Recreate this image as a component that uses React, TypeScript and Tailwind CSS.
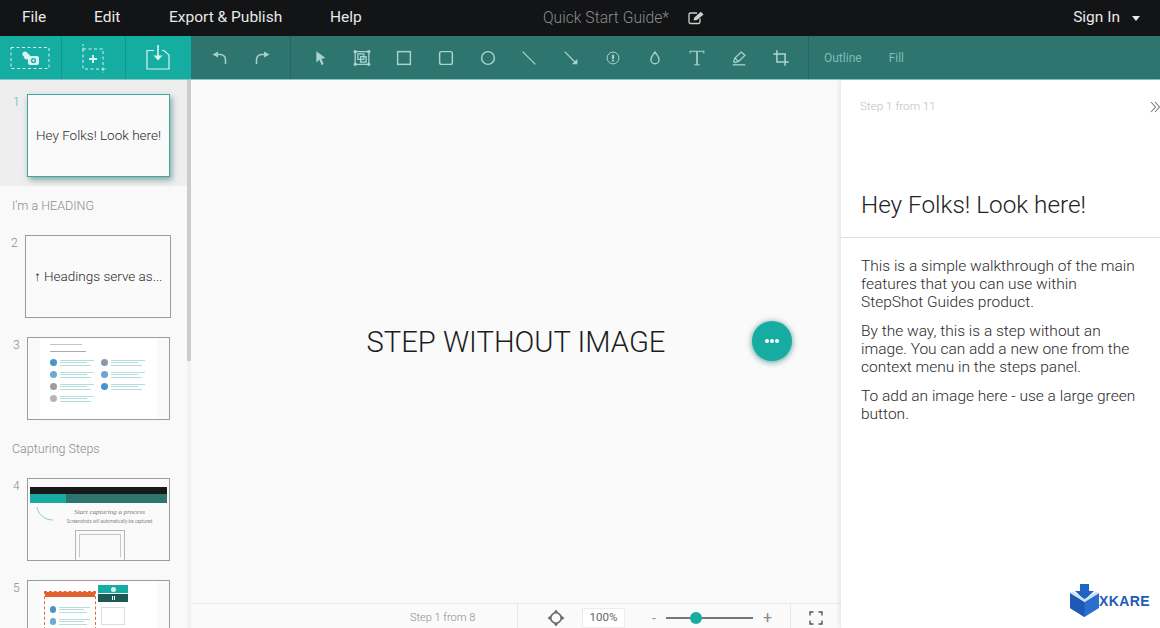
import type { ReactNode } from "react";

const menus = [
  { label: "File", w: "w-[72px]" },
  { label: "Edit", w: "w-[75px]" },
  { label: "Export & Publish", w: "w-[161px]" },
  { label: "Help", w: "w-[60px]" },
];

const Svg = ({ children, size = 22 }: { children: ReactNode; size?: number }) => (
  <svg width={size} height={size} viewBox="0 0 22 22" fill="none" stroke="currentColor" strokeWidth="1.4">
    {children}
  </svg>
);

// drawing tools, left to right
const tools = [
  <path d="M7 3.5 L17 11 L12.6 11.8 L15 17.8 L12.6 18.6 L10.4 13 L7 16 Z" fill="currentColor" stroke="none" />,
  <>
    <rect x="3.5" y="4" width="15" height="14" />
    <rect x="6.5" y="6.5" width="6.5" height="6" />
    <rect x="9.5" y="9.5" width="6" height="6" />
    <circle cx="3.5" cy="4" r="1.2" fill="currentColor" />
    <circle cx="18.5" cy="4" r="1.2" fill="currentColor" />
    <circle cx="3.5" cy="18" r="1.2" fill="currentColor" />
    <circle cx="18.5" cy="18" r="1.2" fill="currentColor" />
  </>,
  <rect x="4" y="4" width="14" height="14" strokeWidth="1.6" />,
  <rect x="4" y="4" width="14" height="14" rx="2" strokeWidth="1.6" />,
  <circle cx="11" cy="11" r="7" strokeWidth="1.6" />,
  <path d="M4 4 L18 18" />,
  <>
    <path d="M4 4 L17 17" />
    <path d="M18 12 L18 18 L12 18 Z" fill="currentColor" stroke="none" />
  </>,
  <>
    <circle cx="11" cy="11" r="6.5" strokeWidth="1.1" />
    <rect x="9.8" y="7.5" width="2.4" height="4.5" fill="currentColor" stroke="none" />
    <rect x="9.8" y="13" width="2.4" height="1.8" fill="currentColor" stroke="none" />
  </>,
  <path d="M11 4.5 C13 7.5 15.5 9.5 15.5 12.8 A4.5 4.5 0 0 1 6.5 12.8 C6.5 9.5 9 7.5 11 4.5 Z" strokeWidth="1.5" />,
  <>
    <path d="M3.5 6 L3.5 3.5 L18.5 3.5 L18.5 6" strokeWidth="1.2" />
    <path d="M11 3.5 L11 18.5" strokeWidth="1.8" />
    <path d="M8 18.5 L14 18.5" strokeWidth="1.2" />
  </>,
  <>
    <path d="M5 15 L6.5 11 L13.5 4.5 L17.5 8 L11 14.5 L7 16 Z" />
    <path d="M6.5 11 L10.5 15" />
    <path d="M4 18.5 L18 18.5" />
  </>,
  <>
    <path d="M6.5 2.5 L6.5 15.5 L19.5 15.5" strokeWidth="1.7" />
    <path d="M2.5 6.5 L15.5 6.5 L15.5 19.5" strokeWidth="1.7" />
  </>,
];

const ThumbFrame = ({ num, children, wide, active }: { num: number; children: ReactNode; wide?: boolean; active?: boolean }) => (
  <div className={`flex items-start ${wide ? "pl-[11px]" : "pl-[13px]"}`}>
    <span className={`w-[14px] text-[12px] leading-[14px] mt-[1px] font-light ${active ? "text-[#4fb7ae]" : "text-[#8a8a8a]"}`}>{num}</span>
    <div
      className={`h-[83px] overflow-hidden bg-[#fafafa] border ${wide ? "w-[146px]" : "w-[143px]"} ${
        active ? "border-[#3fa69e] shadow-[2px_3px_6px_rgba(40,110,105,0.55)]" : "border-[#9c9c9c]"
      }`}
    >
      {children}
    </div>
  </div>
);

const Lines = ({ c, w }: { c: string; w: string }) => (
  <div className={`flex flex-col gap-[1.5px] ${w}`}>
    <div className={`h-[1px] ${c}`} />
    <div className={`h-[1px] ${c} w-4/5`} />
    <div className={`h-[1px] ${c} w-11/12`} />
  </div>
);

const PanelRow = ({ color }: { color: string }) => (
  <div className="flex items-center gap-[3px]">
    <div className={`w-[7px] h-[7px] rounded-full ${color}`} />
    <Lines c="bg-[#b4dedb]" w="w-[34px]" />
  </div>
);

const ControlPanelThumb = () => (
  <div className="h-full mx-[12px] bg-white px-[10px] pt-[6px]">
    <div className="h-[1px] w-[32px] bg-[#c4c4c4] mb-[6px]" />
    <div className="h-[1px] w-[36px] bg-[#aaa] mb-[7px]" />
    <div className="grid grid-cols-2 gap-x-[5px] gap-y-[5px]">
      <PanelRow color="bg-[#4a93cb]" />
      <PanelRow color="bg-[#8a98a8]" />
      <PanelRow color="bg-[#6aabd8]" />
      <PanelRow color="bg-[#6fa2d0]" />
      <PanelRow color="bg-[#9c9c9c]" />
      <PanelRow color="bg-[#4a93cb]" />
      <PanelRow color="bg-[#b5b5b5]" />
    </div>
  </div>
);

const CaptureThumb = () => (
  <div className="relative h-full px-[2px] pt-[8px] flex flex-col items-center">
    <div className="w-full h-[7px] bg-[#17181a] shrink-0" />
    <div className="w-full h-[9px] shrink-0 flex">
      <div className="w-[36px] bg-[#17aca2]" />
      <div className="flex-1 bg-[#2e7570]" />
    </div>
    <svg width="18" height="16" viewBox="0 0 18 16" fill="none" className="absolute left-[8px] top-[27px]">
      <path d="M1 1 C2 8 8 14 17 14" stroke="#7fcfc9" />
    </svg>
    <div className="mt-[5px] ml-[22px] text-[7px] leading-[9px] italic text-[#777] font-['Liberation_Serif',serif] whitespace-nowrap">Start capturing a process</div>
    <div className="mt-[2px] ml-[22px] text-[4.5px] leading-[6px] text-[#888] whitespace-nowrap">Screenshots will automatically be captured</div>
    <div className="mt-[5px] ml-[2px] w-[50px] flex-1 border border-b-0 border-[#b5b5b5] p-[3px]">
      <div className="h-full border border-b-0 border-[#c8c8c8]" />
    </div>
  </div>
);

const WizardThumb = () => (
  <div className="relative h-full mx-[12px] bg-white overflow-hidden">
    <div className="absolute left-[4px] top-[10px] w-[52px] h-[70px] border border-dashed border-[#e0693a]">
      <div className="h-[5px] bg-[#e0622f]" />
      <div className="px-[5px] pt-[9px] flex flex-col gap-[5px]">
        <PanelRow color="bg-[#4a93cb]" />
        <PanelRow color="bg-[#6aabd8]" />
      </div>
    </div>
    <div className="absolute left-[58px] top-[4px] w-[30px]">
      <div className="h-[8px] bg-[#17aca2] flex items-center justify-center">
        <div className="w-[5px] h-[5px] rounded-full bg-[#d5f2ef]" />
      </div>
      <div className="mt-[1px] h-[8px] bg-[#1d5a55] flex items-center justify-center gap-[1px]">
        <div className="w-[1px] h-[4px] bg-white" />
        <div className="w-[1px] h-[4px] bg-white" />
      </div>
      <div className="mt-[5px] mx-[3px] h-[18px] border border-[#ddd]" />
    </div>
  </div>
);

export default function App() {
  return (
    <div className="w-[1160px] h-[628px] flex flex-col overflow-hidden bg-white font-['Roboto',sans-serif]">
      {/* top menu */}
      <header className="h-[36px] shrink-0 bg-[#131416] flex items-center pl-[22px] pr-[20px]">
        {menus.map((m) => (
          <span key={m.label} className={`${m.w} text-[15.5px] text-[#e8e8e8] whitespace-nowrap`}>
            {m.label}
          </span>
        ))}
        <div className="ml-[153px] flex items-center text-[#8b8b8b]">
          <span className="text-[15.7px] font-light w-[145px] whitespace-nowrap">Quick Start Guide*</span>
          <svg width="17" height="14" viewBox="0 0 17 14" fill="none" className="text-[#cfcfcf]">
            <path d="M12 7.5 V11 A1.5 1.5 0 0 1 10.5 12.5 H2.5 A1.5 1.5 0 0 1 1 11 V3.5 A1.5 1.5 0 0 1 2.5 2 H9" stroke="currentColor" strokeWidth="1.3" />
            <path d="M5.5 9.5 L6.3 6.6 L12.8 0.8 L15.6 3.4 L9 9 Z" fill="currentColor" />
          </svg>
        </div>
        <div className="ml-auto flex items-center text-[#e8e8e8]">
          <span className="text-[15.5px]">Sign In</span>
          <div className="ml-[12px] w-0 h-0 border-x-[4.5px] border-x-transparent border-t-[5px] border-t-[#e8e8e8]" />
        </div>
      </header>

      {/* toolbar */}
      <div className="h-[44px] shrink-0 bg-[#2e7570] flex border-b border-b-[#7fc9c3]">
        <div className="w-[191px] bg-[#15aca2] flex text-[#d9f3f0]">
          <div className="w-[62px] border-r border-[#12978e] flex items-center justify-center pr-[2px]">
            <svg width="40" height="24" viewBox="0 0 40 24" fill="none">
              <rect x="1" y="1.5" width="38" height="21" stroke="currentColor" strokeDasharray="3 2.5" />
              <circle cx="15" cy="8" r="2.6" fill="currentColor" />
              <circle cx="17" cy="10.5" r="3" fill="currentColor" />
              <rect x="18" y="10" width="11" height="9" rx="2" fill="currentColor" />
              <circle cx="23.5" cy="14.5" r="2.6" fill="#15aca2" />
              <circle cx="23.5" cy="14.5" r="1.2" fill="currentColor" />
            </svg>
          </div>
          <div className="w-[64px] border-r border-[#12978e] flex items-center justify-center pr-[2px]">
            <svg width="30" height="30" viewBox="0 0 30 30" fill="none">
              <rect x="5" y="6" width="20" height="20" stroke="currentColor" strokeDasharray="3 2.5" />
              <path d="M5 1 V6 M25 26 V30 M25 26 H29" stroke="currentColor" strokeDasharray="2 1.5" />
              <path d="M15 12 V20 M11 16 H19" stroke="currentColor" strokeWidth="1.8" />
            </svg>
          </div>
          <div className="flex-1 flex items-center justify-center pr-[2px]">
            <svg width="24" height="26" viewBox="0 0 24 26" fill="none">
              <path d="M8 5.5 H1 V24 H23 V10 L18 5.5 H16" stroke="currentColor" strokeWidth="1.2" />
              <path d="M12 0 V11" stroke="currentColor" strokeWidth="1.6" />
              <path d="M7.5 10.5 H16.5 L12 15.5 Z" fill="currentColor" />
            </svg>
          </div>
        </div>
        <div className="w-[100px] border-r border-[#256561] flex items-center pl-[18px] gap-[20px] text-[#a9cfcc]">
          <Svg>
            <path d="M9 4.5 V10.5 L3.5 7.5 Z" fill="currentColor" stroke="none" />
            <path d="M8 7.5 H11.5 A5 5 0 0 1 16.5 12.5 V17" strokeWidth="1.5" />
          </Svg>
          <Svg>
            <path d="M13 4.5 V10.5 L18.5 7.5 Z" fill="currentColor" stroke="none" />
            <path d="M14 7.5 H10.5 A5 5 0 0 0 5.5 12.5 V17" strokeWidth="1.5" />
          </Svg>
        </div>
        <div className="w-[518px] border-r border-[#256561] flex items-center pl-[8px] text-[#a9d3d0]">
          {tools.map((t, i) => (
            <div key={i} className="w-[41.9px] flex justify-center">
              <Svg size={20}>{t}</Svg>
            </div>
          ))}
        </div>
        <div className="flex items-center pl-[15px] gap-[27px] text-[12px] text-[#81bab5]">
          <span>Outline</span>
          <span>Fill</span>
        </div>
      </div>

      <div className="flex-1 flex min-h-0">
        {/* steps panel */}
        <aside className="w-[191px] shrink-0 bg-[#f9f9f9] flex overflow-hidden">
          <div className="w-[187px] shrink-0">
            <div className="h-[106px] bg-[#eeeeee] pt-[14px]">
              <ThumbFrame num={1} active>
                <div className="h-full flex items-center justify-center text-[13.5px] font-light text-[#2a2a2a] whitespace-nowrap">Hey Folks! Look here!</div>
              </ThumbFrame>
            </div>
            <div className="h-[49px] pl-[12px] pt-[12px] text-[12.5px] leading-[15px] font-light text-[#8c8c8c]">I'm a HEADING</div>
            <ThumbFrame num={2} wide>
              <div className="h-full flex items-center pl-[8px] text-[13.5px] font-light text-[#2a2a2a] whitespace-nowrap">↑ Headings serve as...</div>
            </ThumbFrame>
            <div className="mt-[19px]">
              <ThumbFrame num={3}>
                <ControlPanelThumb />
              </ThumbFrame>
            </div>
            <div className="h-[58px] pl-[12px] pt-[21px] text-[12.5px] leading-[15px] font-light text-[#8c8c8c]">Capturing Steps</div>
            <ThumbFrame num={4}>
              <CaptureThumb />
            </ThumbFrame>
            <div className="mt-[19px]">
              <ThumbFrame num={5}>
                <WizardThumb />
              </ThumbFrame>
            </div>
          </div>
          <div className="w-[4px] bg-[#f2f2f2]">
            <div className="h-[281px] bg-[#cccccc]" />
          </div>
        </aside>

        {/* canvas */}
        <main className="w-[650px] shrink-0 flex flex-col bg-[#fafafa]">
          <div className="relative flex-1 flex items-center justify-center">
            <span className="pt-[2px] text-[29.2px] font-light text-[#1c1c1c] whitespace-nowrap">STEP WITHOUT IMAGE</span>
            <button className="absolute left-[561px] top-[241px] w-[40px] h-[40px] rounded-full bg-[#17aca2] shadow-[0_1px_6px_rgba(20,110,105,0.7)] flex items-center justify-center gap-[1.5px]">
              <span className="w-[3.5px] h-[3.5px] rounded-full bg-white" />
              <span className="w-[3.5px] h-[3.5px] rounded-full bg-white" />
              <span className="w-[3.5px] h-[3.5px] rounded-full bg-white" />
            </button>
          </div>
          {/* bar runs past the window's lower edge */}
          <footer className="h-[29px] -mb-[4px] shrink-0 border-t border-[#e8e8e8] flex items-center text-[#8a8a8a]">
            <div className="w-[327px] h-full border-r border-[#e8e8e8] pl-[219px] flex items-center text-[11px] font-light whitespace-nowrap">Step 1 from 8</div>
            <div className="ml-[29px] text-[#6a6a6a]">
              <svg width="18" height="18" viewBox="0 0 18 18" fill="none" className="block">
                <circle cx="9" cy="9" r="5.2" stroke="currentColor" strokeWidth="1.6" />
                <path d="M9 0.5 L11.4 3.8 H6.6 Z M9 17.5 L11.4 14.2 H6.6 Z M0.5 9 L3.8 6.6 V11.4 Z M17.5 9 L14.2 6.6 V11.4 Z" fill="currentColor" />
              </svg>
            </div>
            <div className="ml-[17px] w-[43px] h-[20px] bg-white border border-[#ececec] flex items-center justify-center text-[11.5px] text-[#666]">100%</div>
            <span className="ml-[27px] w-[14px] text-[14px] leading-none text-[#999]">-</span>
            <div className="relative w-[87px] h-[2px] bg-[#777]">
              <div className="absolute left-[24px] top-[-5px] w-[12px] h-[12px] rounded-full bg-[#17aca2]" />
            </div>
            <span className="ml-[10px] text-[16px] leading-none text-[#888]">+</span>
            <div className="ml-[18px] h-full w-[50px] border-l border-[#e8e8e8] flex items-center justify-center text-[#555]">
              <svg width="14" height="14" viewBox="0 0 14 14" fill="none" stroke="currentColor" strokeWidth="1.4">
                <path d="M1 4.5 V1 H4.5 M9.5 1 H13 V4.5 M13 9.5 V13 H9.5 M4.5 13 H1 V9.5" />
              </svg>
            </div>
          </footer>
        </main>

        {/* step details */}
        <section className="relative flex-1 bg-white shadow-[-2px_0_4px_rgba(0,0,0,0.08)] overflow-hidden">
          <div className="h-[158px] border-b border-[#dedede] pl-[20px] flex flex-col">
            <div className="flex items-center justify-between h-[53px]">
              <span className="ml-[-1px] text-[11.7px] font-light text-[#bdbdbd]">Step 1 from 11</span>
              <svg width="10" height="12" viewBox="0 0 10 12" fill="none" stroke="#777" strokeWidth="1.1">
                <path d="M1 1 L5.5 6 L1 11 M5 1 L9.5 6 L5 11" />
              </svg>
            </div>
            <h1 className="mt-[56px] text-[24.3px] leading-[32px] font-light text-[#222] whitespace-nowrap">Hey Folks! Look here!</h1>
          </div>
          <div className="pl-[20px] pr-[20px] pt-[19px] flex flex-col gap-[11px] text-[15.5px] leading-[18px] font-light text-[#2a2a2a]">
            <p>This is a simple walkthrough of the main features that you can use within StepShot Guides product.</p>
            <p>By the way, this is a step without an image. You can add a new one from the context menu in the steps panel.</p>
            <p>To add an image here - use a large green button.</p>
          </div>
          {/* watermark */}
          <div className="absolute right-[10px] bottom-[11px] flex items-center">
            <svg width="30" height="33" viewBox="0 0 30 33">
              <path d="M10 0 H19 V7 H24 L14.5 16 L5 7 H10 Z" fill="#1f63c4" />
              <path d="M0 9 L14.5 18 L29 9 V24 L14.5 33 L0 24 Z" fill="#2a6fd0" />
              <path d="M0 9 L14.5 18 L14.5 33 L0 24 Z" fill="#1c5ab5" />
              <path d="M0 9 L3 8 L14.5 15 L26 8 L29 9 L14.5 18 Z" fill="#cfe0f6" />
            </svg>
            <span className="ml-[-1px] mt-[1px] text-[14px] leading-none font-bold tracking-[0.4px] text-[#1d5cb8] font-['Liberation_Sans',sans-serif]">XKARE</span>
          </div>
        </section>
      </div>
    </div>
  );
}
